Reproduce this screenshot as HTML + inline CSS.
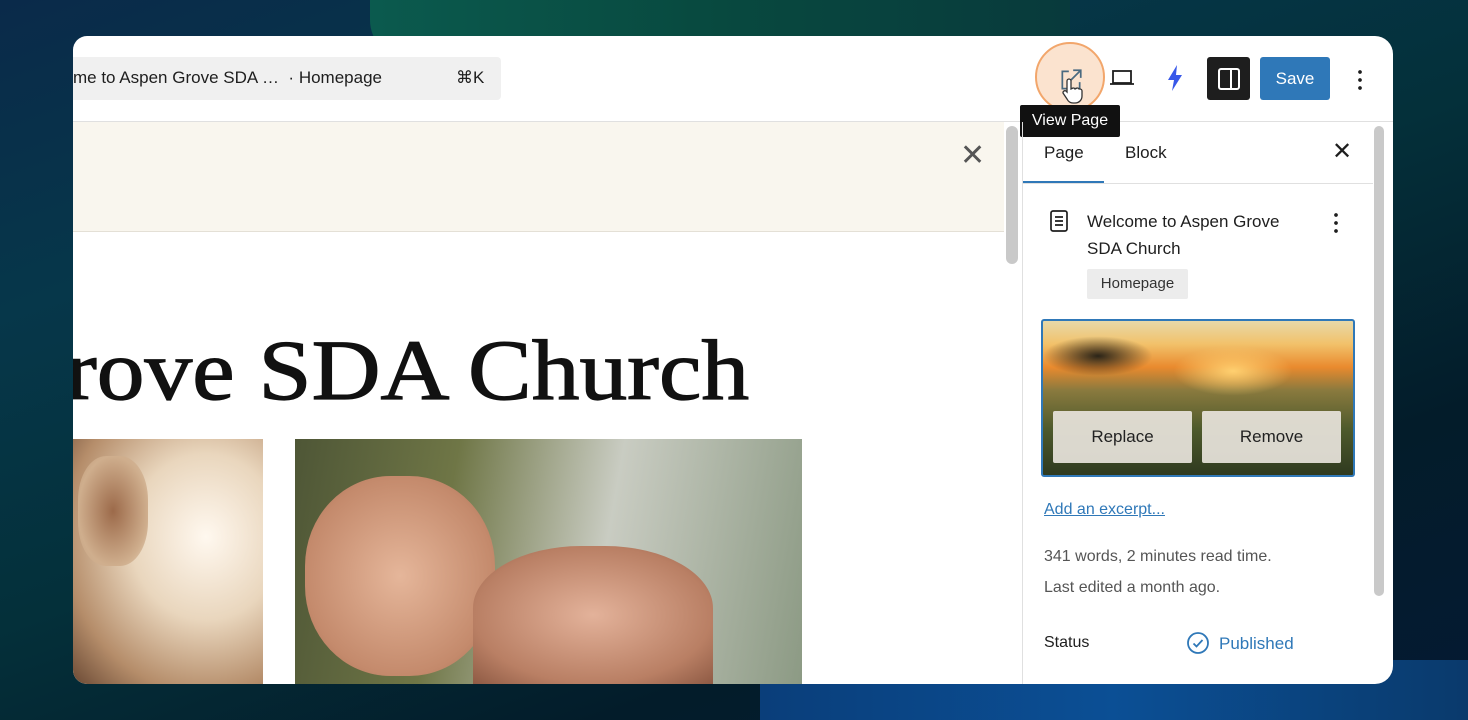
<!DOCTYPE html>
<html><head><meta charset="utf-8"><style>
*{margin:0;padding:0;box-sizing:border-box}
body{width:1468px;height:720px;overflow:hidden;font-family:"Liberation Sans",sans-serif;position:relative;
background:linear-gradient(160deg,#0a2a4a 0%,#06374a 25%,#04303a 50%,#031c2a 75%,#051a33 100%)}
.bg1{position:absolute;left:370px;top:0;width:700px;height:60px;background:linear-gradient(90deg,#0b5a4e,#08493f,#083a3c);border-radius:0 0 0 40px}
.bg2{position:absolute;left:760px;top:660px;width:708px;height:60px;background:linear-gradient(90deg,#0a3e7a,#0b4f95,#0a3a6c)}
.card{position:absolute;left:73px;top:36px;width:1320px;height:648px;background:#fff;border-radius:14px 18px 18px 14px;overflow:hidden}
.abs{position:absolute}
.t{font-size:17px;color:#1e1e1e}
</style></head><body>
<div class="bg1"></div><div class="bg2"></div>
<div class="card">
 <div class="abs" style="left:0;top:21px;width:428px;height:43px;background:#f0f0f0;border-radius:0 4px 4px 0"></div>
 <div class="abs t" style="left:0;top:32px;font-size:17px">me to Aspen Grove SDA … &nbsp;· Homepage</div>
 <div class="abs t" style="left:383px;top:32px">⌘K</div>
 <div class="abs" style="left:0;top:85px;width:1320px;height:1px;background:#e0e0e0"></div>
 <div class="abs" style="left:962px;top:6px;width:70px;height:70px;border-radius:50%;background:#fbe3cf;border:2px solid #f2a66b"></div>
 <svg class="abs" style="left:985px;top:31px" width="26" height="26" viewBox="0 0 24 24" fill="none" stroke="#4a6a80" stroke-width="1.6"><path d="M10 4H4v16h16v-6M14 3h7v7M21 3l-9 9"/></svg>
 <svg class="abs" style="left:988px;top:42px" width="22" height="26" viewBox="0 0 22 26" fill="#fff" stroke="#333" stroke-width="1.3"><path d="M6 3a2 2 0 014 0v8l2-1a2 2 0 012 1l2-1a2 2 0 012 1l1 0a2 2 0 012 2v5c0 4-3 7-7 7h-2c-3 0-5-2-6-4L2 15a2 2 0 013-2l1 1z"/></svg>
 <svg class="abs" style="left:1036px;top:32px" width="26" height="20" viewBox="0 0 26 20" fill="none" stroke="#1e1e1e" stroke-width="1.8"><rect x="4" y="3" width="18" height="12"/><path d="M1 16h24"/></svg>
 <svg class="abs" style="left:1093px;top:28px" width="18" height="28" viewBox="0 0 18 28"><path d="M11 1L2 16h6l-2 11 10-16h-6z" fill="#3858e9"/></svg>
 <div class="abs" style="left:1134px;top:21px;width:43px;height:43px;background:#1e1e1e;border-radius:3px"></div>
 <svg class="abs" style="left:1144px;top:31px" width="24" height="24" viewBox="0 0 24 24" fill="none" stroke="#fff" stroke-width="2"><rect x="2" y="2" width="20" height="20" rx="2"/><path d="M14 2v20"/></svg>
 <div class="abs" style="left:1187px;top:21px;width:70px;height:43px;background:#2f78b8;border-radius:3px;color:#fff;font-size:17px;line-height:43px;text-align:center">Save</div>
 <div class="abs" style="left:1285px;top:32px;width:4px;height:22px;background:radial-gradient(circle,#1e1e1e 1.7px,transparent 2px) 0 0/4px 8px"></div>
 <div class="abs" style="left:947px;top:69px;width:100px;height:32px;background:#111;border-radius:2px;color:#fff;font-size:16px;line-height:32px;text-align:center">View Page</div>
 <div class="abs" style="left:0;top:86px;width:931px;height:110px;background:#f9f6ee;border-bottom:1px solid #e4e0d6"></div>
 <div class="abs" style="left:887px;top:102px;font-size:30px;color:#555;font-weight:300">✕</div>
 <div class="abs" style="left:-8px;top:284px;font-family:'Liberation Serif',serif;font-size:86px;color:#111;-webkit-text-stroke:1.2px #111;letter-spacing:0;white-space:nowrap;transform:scaleX(1.11);transform-origin:left">rove SDA Church</div>
 <div class="abs" style="left:0;top:403px;width:190px;height:245px;background:radial-gradient(ellipse at 70% 40%,#fff8ef 0%,#e9d6bd 40%,#b58d6a 75%,#6b4a35 100%)"></div>
 <div class="abs" style="left:5px;top:420px;width:70px;height:110px;border-radius:40%;background:radial-gradient(ellipse,#9c6a4a,#cfae8d 70%,transparent)"></div>
 <div class="abs" style="left:222px;top:403px;width:507px;height:245px;background:linear-gradient(100deg,#4e5636 0%,#6f7646 30%,#c9ccc2 60%,#8c9a84 100%)"></div>
 <div class="abs" style="left:232px;top:440px;width:190px;height:200px;border-radius:45%;background:radial-gradient(ellipse,#e5b69a,#c48a6c 70%,#a06a50)"></div>
 <div class="abs" style="left:400px;top:510px;width:240px;height:138px;border-radius:45% 45% 0 0;background:radial-gradient(ellipse,#e3b29a,#b97f64 70%,#8e5a44)"></div>
 <div class="abs" style="left:933px;top:90px;width:12px;height:138px;background:#c9c9c9;border-radius:6px"></div>
 <div class="abs" style="left:949px;top:86px;width:1px;height:562px;background:#e0e0e0"></div>
 <div class="abs" style="left:1301px;top:90px;width:10px;height:470px;background:#c9c9c9;border-radius:5px"></div>
 <div class="abs t" style="left:971px;top:107px">Page</div>
 <div class="abs t" style="left:1052px;top:107px">Block</div>
 <div class="abs" style="left:1259px;top:101px;font-size:24px;color:#1e1e1e">✕</div>
 <div class="abs" style="left:950px;top:145px;width:81px;height:3px;background:#2f78b8"></div>
 <div class="abs" style="left:950px;top:147px;width:350px;height:1px;background:#e0e0e0"></div>
 <svg class="abs" style="left:975px;top:173px" width="22" height="24" viewBox="0 0 22 24" fill="none" stroke="#1e1e1e" stroke-width="1.7"><rect x="3" y="2" width="16" height="20" rx="2"/><path d="M7 8h8M7 12h8M7 16h8"/></svg>
 <div class="abs t" style="left:1014px;top:172px;line-height:27px;font-size:17px">Welcome to Aspen Grove<br>SDA Church</div>
 <div class="abs" style="left:1261px;top:175px;width:4px;height:22px;background:radial-gradient(circle,#1e1e1e 1.7px,transparent 2px) 0 0/4px 8px"></div>
 <div class="abs" style="left:1014px;top:233px;width:101px;height:30px;background:#ececec;border-radius:2px;font-size:15px;color:#333;line-height:30px;text-align:center">Homepage</div>
 <div class="abs" style="left:968px;top:283px;width:314px;height:158px;border:2px solid #2f78b8;border-radius:3px;overflow:hidden;background:linear-gradient(180deg,#e7d9a8 0%,#f2c16a 15%,#e98a2e 30%,#8a7a3e 45%,#4e5a2c 70%,#2f3a1f 100%)">
  <div class="abs" style="left:130px;top:25px;width:120px;height:50px;background:radial-gradient(ellipse,#ffd070,transparent 70%)"></div>
  <div class="abs" style="left:0;top:15px;width:110px;height:40px;background:radial-gradient(ellipse,#2a2418,transparent 70%)"></div>
  <div class="abs" style="left:10px;top:90px;width:139px;height:52px;background:rgba(232,228,220,.92);border-radius:2px;font-size:17px;line-height:52px;text-align:center;color:#222">Replace</div>
  <div class="abs" style="left:159px;top:90px;width:139px;height:52px;background:rgba(232,228,220,.92);border-radius:2px;font-size:17px;line-height:52px;text-align:center;color:#222">Remove</div>
 </div>
 <div class="abs" style="left:971px;top:465px;font-size:16px;color:#2f78b8;text-decoration:underline">Add an excerpt...</div>
 <div class="abs" style="left:971px;top:512px;font-size:16px;color:#555">341 words, 2 minutes read time.</div>
 <div class="abs" style="left:971px;top:543px;font-size:16px;color:#555">Last edited a month ago.</div>
 <div class="abs t" style="left:971px;top:598px;font-size:16px">Status</div>
 <svg class="abs" style="left:1113px;top:595px" width="24" height="24" viewBox="0 0 24 24" fill="none" stroke="#2f78b8" stroke-width="1.8"><circle cx="12" cy="12" r="10"/><path d="M7.5 12.5l3 3 6-6.5"/></svg>
 <div class="abs" style="left:1146px;top:598px;font-size:17px;color:#2f78b8">Published</div>
</div>
</body></html>
